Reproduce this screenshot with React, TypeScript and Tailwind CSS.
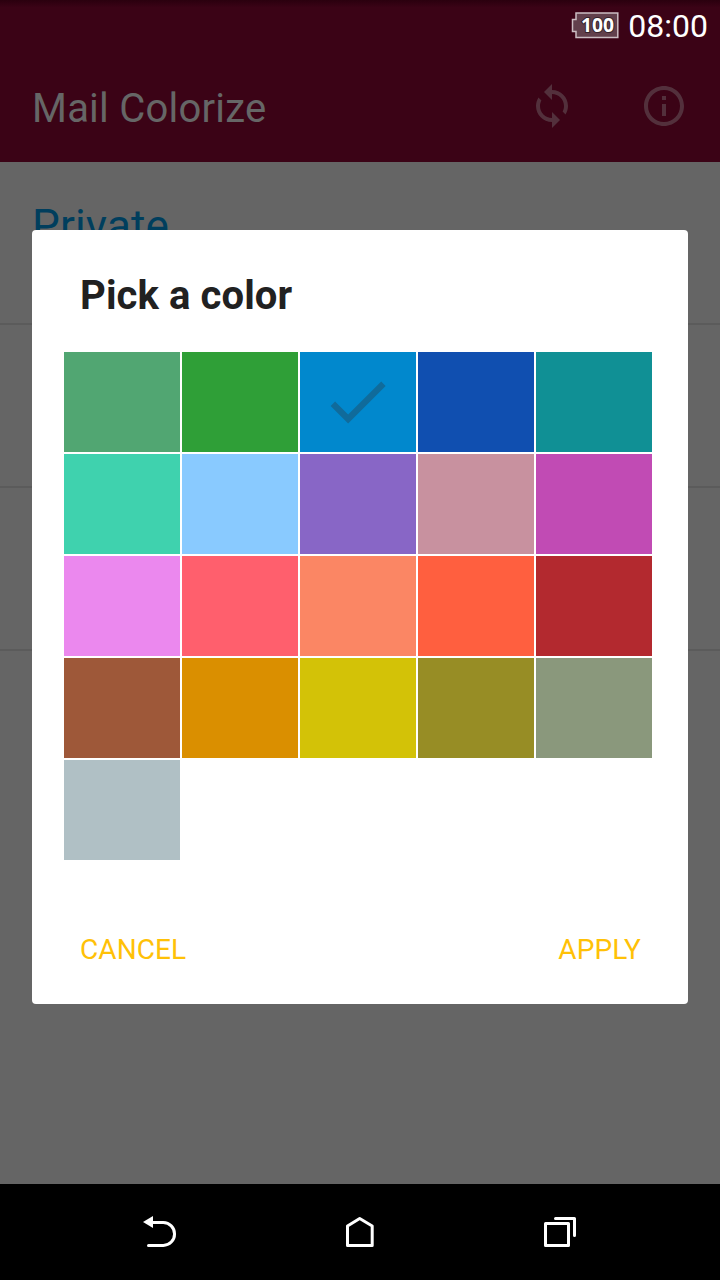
import React from "react";

const swatches = [
  "bg-[#51a672]", "bg-[#2f9f37]", "bg-[#0188cd]", "bg-[#104fb0]", "bg-[#109095]",
  "bg-[#3fd2ae]", "bg-[#89caff]", "bg-[#8866c6]", "bg-[#c8919f]", "bg-[#c14bb4]",
  "bg-[#eb88ee]", "bg-[#ff5f6d]", "bg-[#fb8664]", "bg-[#ff5f3f]", "bg-[#b3292f]",
  "bg-[#9e5839]", "bg-[#da8f00]", "bg-[#d3c207]", "bg-[#978d25]", "bg-[#8a987c]",
  "bg-[#b0c0c5]",
];
const selected = 2;

function StatusBar() {
  return (
    <div className="flex h-[50px] items-center justify-end bg-linear-to-b from-[#2a000e] from-0% to-[#3b0316] to-15% pr-3">
      <svg className="mt-[2px] mr-[9px] h-7 w-12" viewBox="0 0 48 28">
        <path d="M5 1H46.8V25.5H5V19.5H1.5V7.5H5Z" fill="#62404c" stroke="#cbbdc2" strokeWidth="1.5" />
        <text x="26.4" y="20" textAnchor="middle" textLength="33" lengthAdjust="spacingAndGlyphs" fontSize="19" fontWeight="700" fontFamily="Noto Sans, sans-serif" fill="#fff" stroke="#35222a" strokeWidth="2" paintOrder="stroke">100</text>
      </svg>
      <span className="pt-0.5 text-[32px] leading-[50px] text-white">08:00</span>
    </div>
  );
}

function Toolbar() {
  return (
    <div className="flex h-28 items-center pr-8 pl-8">
      <h1 className="flex-1 pt-1.5 text-[40px] leading-10 tracking-[0.22px] text-[#666]">Mail Colorize</h1>
      <svg className="mr-16 size-12 fill-[#53303c]" viewBox="0 0 24 24">
        <path d="M12 4V1L8 5l4 4V6c3.31 0 6 2.69 6 6 0 1.01-.25 1.97-.7 2.8l1.46 1.46C19.54 15.03 20 13.57 20 12c0-4.42-3.58-8-8-8zm0 14c-3.31 0-6-2.69-6-6 0-1.01.25-1.97.7-2.8L5.24 7.74C4.46 8.97 4 10.43 4 12c0 4.42 3.58 8 8 8v3l4-4-4-4v3z" />
      </svg>
      <svg className="size-12 fill-[#53303c]" viewBox="0 0 24 24">
        <path d="M11 17h2v-6h-2v6zm1-15C6.48 2 2 6.48 2 12s4.48 10 10 10 10-4.48 10-10S17.52 2 12 2zm0 18c-4.41 0-8-3.59-8-8s3.59-8 8-8 8 3.59 8 8-3.59 8-8 8zM11 9h2V7h-2v2z" />
      </svg>
    </div>
  );
}

function ColorDialog() {
  return (
    <div role="dialog" className="absolute top-[230px] left-8 flex h-[774px] w-[656px] flex-col rounded bg-white px-8">
      <h2 className="h-[122px] px-4 pt-[42px] text-[40px] leading-[47px] font-bold tracking-[0.1px] text-[#212121]">Pick a color</h2>
      <div className="grid grid-cols-[repeat(5,116px)] gap-0.5">
        {swatches.map((color, i) => (
          <button key={color} className={`flex h-[100px] items-center justify-center ${color}`}>
            {i === selected && (
              <svg className="mr-px mb-px size-[75px] fill-[#106b9b]" viewBox="0 0 24 24">
                <path d="M9 16.17L4.83 12l-1.42 1.41L9 19 21 7l-1.41-1.41z" />
              </svg>
            )}
          </button>
        ))}
      </div>
      <div className="mt-auto flex justify-between pr-[15px] pb-[38px] pl-4 text-[28px] leading-8 tracking-[0.1px] text-[#ffc107]">
        <button>CANCEL</button>
        <button>APPLY</button>
      </div>
    </div>
  );
}

function NavBar() {
  return (
    <nav className="flex h-24 items-center justify-between bg-black px-[136px]">
      <svg className="size-12" viewBox="0 0 48 48" fill="none" stroke="#fff" strokeWidth="3" strokeLinecap="round">
        <path d="M16 14.5H27.3A11.2 11.4 0 0 1 27.3 37.4H12.5" />
        <path d="M7 14L17 8V20Z" fill="#fff" stroke="none" />
      </svg>
      <svg className="size-12" viewBox="0 0 48 48" fill="none" stroke="#fff" strokeWidth="3" strokeLinejoin="round">
        <path d="M11.5 18L23.7 10.5L36.2 18V37.5H11.5Z" />
      </svg>
      <svg className="size-12" viewBox="0 0 48 48" fill="none" stroke="#fff" strokeWidth="3" strokeLinecap="round" strokeLinejoin="round">
        <path d="M9.5 15.5H32.5V37.5H9.5ZM19.5 10.5H38.5V27.5" />
      </svg>
    </nav>
  );
}

export default function App() {
  return (
    <div className="relative flex h-[1280px] w-[720px] flex-col overflow-hidden bg-[#656565] font-['Roboto',sans-serif]">
      <header className="h-[162px] bg-[#3b0316]">
        <StatusBar />
        <Toolbar />
      </header>
      <main className="flex-1">
        <div className="h-[163px] border-b-2 border-[#5b5b5b] px-8 pt-[38px] text-[44px] leading-[52px] tracking-[0.15px] text-[#003e5d]">Private</div>
        <div className="h-[163px] border-b-2 border-[#5b5b5b]" />
        <div className="h-[163px] border-b-2 border-[#5b5b5b]" />
      </main>
      <NavBar />
      <ColorDialog />
    </div>
  );
}
